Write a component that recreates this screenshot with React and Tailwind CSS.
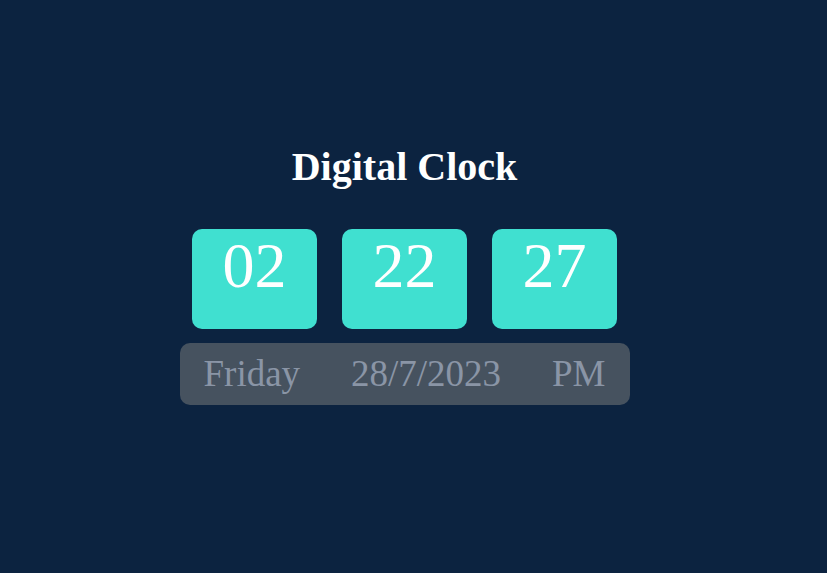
export default function App() {
  const time = { h: '02', m: '22', s: '27' };
  const info = { day: 'Friday', date: '28/7/2023', period: 'PM' };

  return (
    <div className="min-h-screen w-full bg-[#0c2340] font-['Liberation_Serif','Times_New_Roman',serif]">
      <div className="w-[809px] flex flex-col items-center pt-[144px]">
        <h1 className="text-[40px] leading-[1.15] font-bold text-white">Digital Clock</h1>

        <div className="flex gap-[25px] mt-[39px]">
          {[time.h, time.m, time.s].map((v, i) => (
            <div
              key={i}
              className="w-[125px] h-[100px] rounded-[10px] bg-[#40e0d0] text-white text-[64px] leading-[1.15] text-center"
            >
              {v}
            </div>
          ))}
        </div>

        <div className="mt-[14px] w-[450px] h-[62px] rounded-[10px] bg-[#46525f] px-6 flex items-center justify-between text-[37px] leading-[1.15] text-[#8a95a6]">
          <span>{info.day}</span>
          <span>{info.date}</span>
          <span>{info.period}</span>
        </div>
      </div>
    </div>
  );
}
